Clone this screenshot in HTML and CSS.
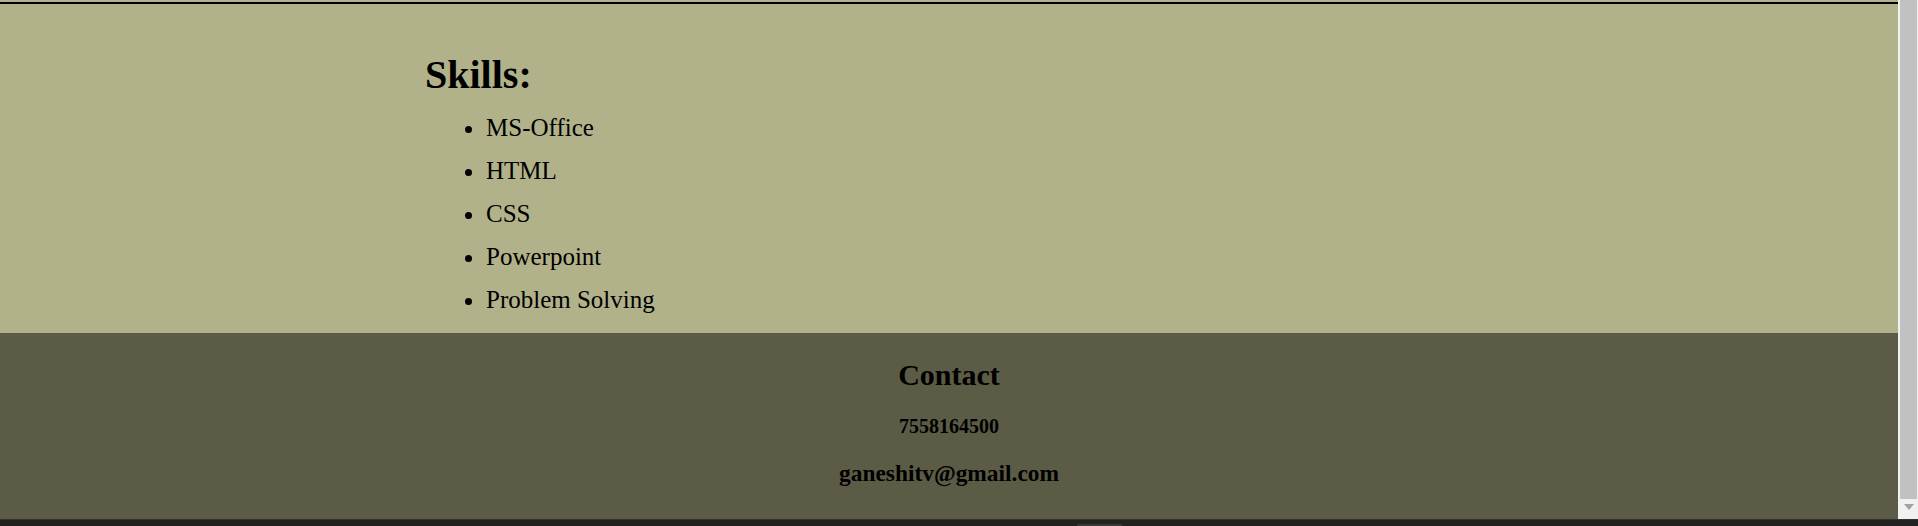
FILE: index.html
```html
<!DOCTYPE html>
<html lang="en">
<head>
<meta charset="utf-8">
<title>Resume</title>
<link rel="stylesheet" href="styles.css">
</head>
<body>
<div class="window">
  <div class="viewport">
    <main class="page">
      <div class="prev-section"></div>
      <section class="skills">
        <h2 class="skills-title">Skills:</h2>
        <ul class="skills-list">
          <li>MS-Office</li>
          <li>HTML</li>
          <li>CSS</li>
          <li>Powerpoint</li>
          <li>Problem Solving</li>
        </ul>
      </section>
      <footer class="contact">
        <h3 class="contact-title">Contact</h3>
        <p class="contact-phone">7558164500</p>
        <p class="contact-email">ganeshitv@gmail.com</p>
      </footer>
    </main>
    <div class="scrollbar">
      <div class="scroll-thumb"></div>
      <div class="scroll-arrow">
        <svg width="10" height="7" viewBox="0 0 10 7"><polygon points="0,0 10,0 5,6" fill="#a3a3a3"/></svg>
      </div>
    </div>
  </div>
  <div class="taskbar"><div class="taskbar-tab"></div></div>
</div>
</body>
</html>
```
FILE: styles.css
```css
html, body {
  margin: 0;
  padding: 0;
}
body {
  width: 1918px;
  height: 526px;
  overflow: hidden;
  font-family: "Liberation Serif", "Times New Roman", serif;
  color: #000;
}
.window {
  display: flex;
  flex-direction: column;
  height: 526px;
}
.viewport {
  display: flex;
  height: 519px;
}
.page {
  flex: 1;
  display: flex;
  flex-direction: column;
}
.prev-section {
  height: 2px;
  background: #b2b28a;
  border-bottom: 2px solid #000;
}
.skills {
  background: #b2b28a;
  padding: 51px 0 0 425px;
  height: 278px;
}
.skills-title {
  margin: 0;
  font-size: 40px;
  line-height: 40px;
  font-weight: bold;
}
.skills-list {
  margin: 11px 0 0;
  padding-left: 61px;
  list-style: disc;
}
.skills-list li {
  font-size: 25px;
  line-height: 43px;
}
.contact {
  flex: 1;
  background: #5c5b46;
  text-align: center;
  padding-top: 27px;
}
.contact-title {
  margin: 0;
  font-size: 30px;
  line-height: 30px;
  font-weight: bold;
}
.contact-phone {
  margin: 26px 0 0;
  font-size: 20px;
  line-height: 20px;
  font-weight: bold;
}
.contact-email {
  margin: 26px 0 0;
  font-size: 23.4px;
  line-height: 23px;
  font-weight: bold;
}
.scrollbar {
  width: 20px;
  background: #f1f1f1;
  display: flex;
  flex-direction: column;
}
.scroll-thumb {
  height: 499px;
  margin: 0 1px 0 2px;
  background: #c1c1c1;
}
.scroll-arrow {
  flex: 1;
  display: flex;
  justify-content: center;
  align-items: flex-start;
  padding-top: 5px;
  padding-left: 1px;
}
.scroll-arrow svg {
  display: block;
}
.taskbar {
  flex: 1;
  background: #222;
  border-top: 1px solid #333;
  position: relative;
}
.taskbar-tab {
  position: absolute;
  left: 1077px;
  width: 45px;
  top: 4px;
  height: 2px;
  background: #3a3a3a;
  border-radius: 2px 2px 0 0;
}
```
